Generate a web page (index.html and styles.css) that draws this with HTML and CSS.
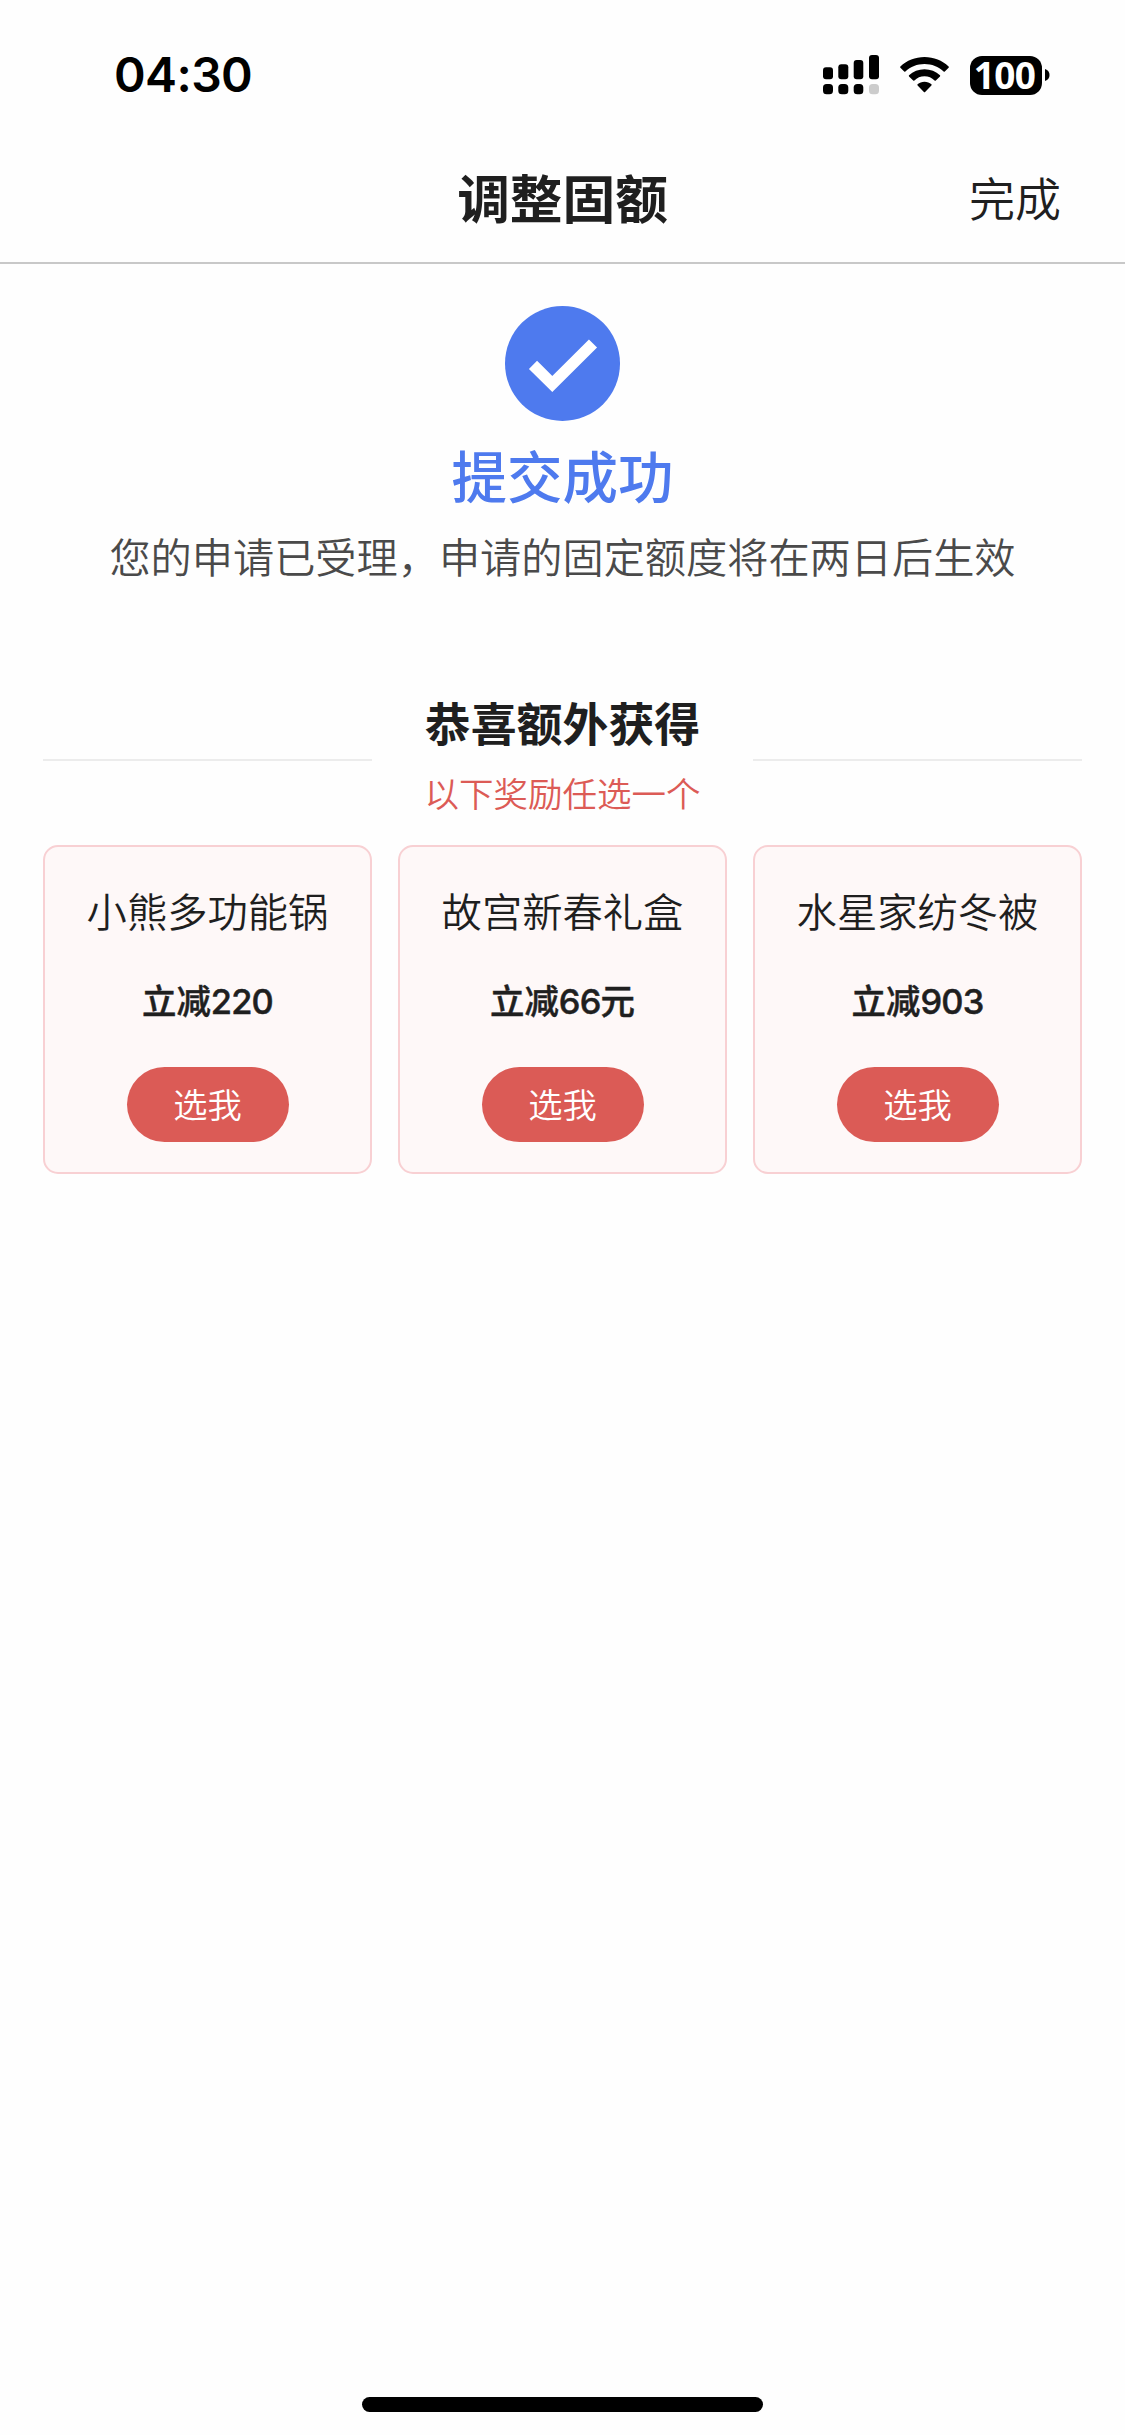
FILE: index.html
```html
<!DOCTYPE html>
<html lang="zh-CN">
<head>
<meta charset="utf-8">
<title>调整固额</title>
<link rel="stylesheet" href="styles.css">
</head>
<body>
<div class="screen">
  <div class="status">
    <span class="time">04:30</span>
    <div class="indicators">
      <svg class="signal" width="56" height="40" viewBox="0 0 56 40">
        <rect x="0" y="12.3" width="10" height="12" rx="3"/>
        <rect x="15.3" y="9.3" width="10" height="15" rx="3"/>
        <rect x="30.7" y="5" width="9.6" height="19.3" rx="3"/>
        <rect x="46" y="0" width="10" height="24.3" rx="3"/>
        <rect x="0" y="29" width="10" height="10.3" rx="3.6"/>
        <rect x="15.3" y="29" width="10" height="10.3" rx="3.6"/>
        <rect x="30.7" y="29" width="9.6" height="10.3" rx="3.6"/>
        <rect class="dim" x="46" y="29" width="10" height="10.3" rx="3.6"/>
      </svg>
      <svg class="wifi" width="49" height="36" viewBox="0 0 49 36">
        <path d="M24.5 0C33.8 0 42.300 3.500 48.600 9.500Q49.100 10.200 48.600 10.800L44.800 14.600Q44.200 15 43.600 14.500C38.500 9.700 31.800 7 24.500 7S10.500 9.700 5.400 14.500Q4.800 15 4.200 14.600L0.400 10.800Q-0.100 10.200 0.400 9.500C6.700 3.500 15.200 0 24.500 0Z"/>
        <path d="M24.500 12.200C30.500 12.200 35.900 14.400 40 18.200Q40.400 18.800 40 19.400L35.800 23.500Q35.200 23.900 34.600 23.400C31.900 20.900 28.400 19.300 24.500 19.300S17.100 20.900 14.400 23.400Q13.800 23.900 13.200 23.500L9 19.400Q8.600 18.800 9 18.200C13.100 14.400 18.500 12.200 24.500 12.200Z"/>
        <path d="M24.500 24.700C27.200 24.700 29.600 25.700 31.400 27.200Q32 27.800 31.400 28.400L25.100 35Q24.500 35.600 23.900 35L17.600 28.400Q17 27.800 17.600 27.200C19.400 25.700 21.800 24.700 24.500 24.700Z"/>
      </svg>
      <div class="battery">
        <span class="level">100</span>
        <svg class="cap" width="5" height="12" viewBox="0 0 5 12"><path d="M0 0Q4.500 1.600 4.500 6T0 12Z"/></svg>
      </div>
    </div>
  </div>
  <header class="nav">
    <h1 class="nav-title">调整固额</h1>
    <a class="done">完成</a>
  </header>
  <main class="content">
    <section class="result">
      <svg class="check" width="115" height="115" viewBox="0 0 115 115">
        <circle cx="57.500" cy="57.500" r="57.500" fill="#4e7aee"/>
        <path d="M28 58.800L47.300 78L88 37.500" fill="none" stroke="#fff" stroke-width="11.500"/>
      </svg>
      <h2 class="result-title">提交成功</h2>
      <p class="result-text">您的申请已受理，申请的固定额度将在两日后生效</p>
    </section>
    <section class="rewards">
      <div class="rewards-head">
        <i class="rule"></i>
        <div class="rewards-label">
          <h3 class="rewards-title">恭喜额外获得</h3>
          <p class="rewards-hint">以下奖励任选一个</p>
        </div>
        <i class="rule"></i>
      </div>
      <div class="cards">
        <article class="card">
          <div class="card-name">小熊多功能锅</div>
          <div class="card-price">立减<span class="digits">220</span></div>
          <button class="pick">选我</button>
        </article>
        <article class="card">
          <div class="card-name">故宫新春礼盒</div>
          <div class="card-price">立减<span class="digits">66</span>元</div>
          <button class="pick">选我</button>
        </article>
        <article class="card">
          <div class="card-name">水星家纺冬被</div>
          <div class="card-price">立减<span class="digits">903</span></div>
          <button class="pick">选我</button>
        </article>
      </div>
    </section>
  </main>
  <div class="home-indicator"></div>
</div>
</body>
</html>
```
FILE: styles.css
```css
* { box-sizing: border-box; margin: 0; padding: 0; }

body {
  background: #fefefe;
  color: #1f1f1f;
  font-family: "Noto Sans CJK SC", sans-serif;
}

.screen {
  width: 1125px;
  height: 2435px;
  display: flex;
  flex-direction: column;
}

.status {
  height: 130px;
  padding: 20px 75px 0 114px;
  display: flex;
  justify-content: space-between;
  align-items: center;
  color: #000;
}

.time {
  font: 600 48px/60px Inter, sans-serif;
  letter-spacing: -0.6px;
}

.indicators { display: flex; align-items: center; }
.signal { margin-right: 21px; }
.signal .dim { fill: #ccc; }
.wifi { margin-right: 21px; }

.battery { display: flex; align-items: center; gap: 3px; }
.level {
  width: 72px;
  height: 39px;
  padding-right: 3px;
  border-radius: 12px;
  background: #000;
  color: #fff;
  font: 700 37px/37px "Noto Sans", sans-serif;
  letter-spacing: -0.7px;
  text-align: center;
}

.nav {
  height: 134px;
  padding: 0 64px;
  border-bottom: 2px solid #c8c8c8;
  display: grid;
  grid-template-columns: 1fr auto 1fr;
  align-items: center;
}
.nav-title {
  grid-column: 2;
  font-size: 52.700px;
  line-height: 80px;
  font-weight: 700;
}
.done {
  justify-self: end;
  font-size: 46px;
  line-height: 70px;
  font-weight: 350;
}

.content { flex: 1; padding: 42px 43px 0; }

.result {
  display: flex;
  flex-direction: column;
  align-items: center;
}
.result-title {
  margin-top: 14px;
  font-size: 55.500px;
  line-height: 79px;
  font-weight: 500;
  color: #4e7aee;
}
.result-text {
  margin-top: 11px;
  font-size: 41.200px;
  line-height: 60px;
  font-weight: 350;
  color: #4a4a4a;
  white-space: nowrap;
}

.rewards { margin-top: 106px; }
.rewards-head {
  display: grid;
  grid-template-columns: repeat(3, 1fr);
  column-gap: 26px;
  align-items: center;
}
.rule {
  height: 2px;
  margin-top: 11px;
  background: #ececec;
}
.rewards-label { text-align: center; }
.rewards-title {
  font-size: 45.900px;
  line-height: 60px;
  font-weight: 700;
}
.rewards-hint {
  margin-top: 16px;
  font-size: 34.500px;
  line-height: 50px;
  font-weight: 350;
  color: #dc5b56;
}

.cards {
  margin-top: 28px;
  display: grid;
  grid-template-columns: repeat(3, 1fr);
  column-gap: 26px;
}
.card {
  height: 329px;
  padding-top: 33px;
  border: 2px solid #f8d0d3;
  border-radius: 15px;
  background: #fef8f8;
  display: flex;
  flex-direction: column;
  align-items: center;
}
.card-name { font-size: 40.300px; line-height: 60px; font-weight: 350; }
.card-price {
  margin-top: 37px;
  height: 50px;
  font-size: 34.400px;
  line-height: 45px;
  font-weight: 500;
  -webkit-text-stroke: 0.5px currentColor;
}
.digits {
  font-family: Inter, sans-serif;
  letter-spacing: -0.8px;
}
.pick {
  margin-top: 40px;
  width: 162px;
  height: 75px;
  padding-bottom: 4px;
  border: 0;
  border-radius: 38px;
  background: #db5b56;
  color: #fff;
  font: 350 34.300px/50px "Noto Sans CJK SC", sans-serif;
}

.home-indicator {
  width: 401px;
  height: 15px;
  margin: 0 auto 23px;
  border-radius: 8px;
  background: #000;
}
```
